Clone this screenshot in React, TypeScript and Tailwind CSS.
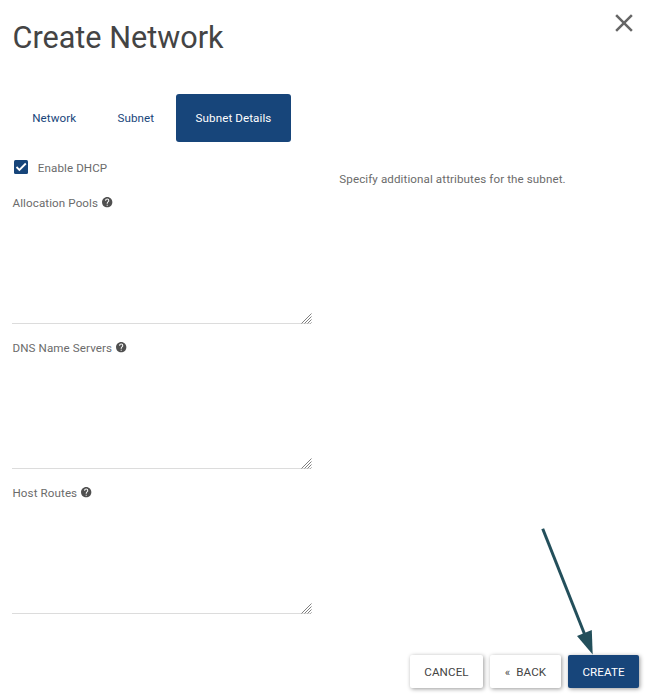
import { MdClose, MdHelp } from "react-icons/md";

function ResizeGrip() {
  return (
    <svg className="absolute -bottom-px -right-px h-[11px] w-[11px]" viewBox="0 0 11 11" aria-hidden="true">
      <path d="M0.5 10.5L10.5 0.5M3.5 10.5L10.5 3.5M6.5 10.5L10.5 6.5M9.5 10.5L10.5 9.5" stroke="#808080" strokeWidth="1" fill="none" />
    </svg>
  );
}

function Field({ label }: { label: string }) {
  return (
    <div className="h-[145px]">
      <div className="flex h-[20px] items-center gap-[3px] pl-[0.5px]">
        <span className="whitespace-nowrap">{label}</span>
        <MdHelp className="relative -top-[0.8px] size-[12.4px] text-[#505050]" />
      </div>
      <div className="relative h-[111px] w-[299px] border-b border-[#dcdcdc]">
        <ResizeGrip />
      </div>
    </div>
  );
}

export default function App() {
  return (
    <div className="flex h-[697px] w-[651px] flex-col overflow-hidden bg-white font-[Roboto,sans-serif] text-[11.6px] leading-[20px] tracking-[0.1px] text-[#6b6b6b]">
      <header className="flex h-[94px] justify-between pl-[12.5px] pr-[12px]">
        <h1 className="pt-[18px] text-[30.6px] leading-[40px] tracking-normal text-[#444]">Create Network</h1>
        <MdClose className="mt-[8.4px] size-[30px] text-[#666]" />
      </header>
      <nav className="flex h-[48px] items-center pl-[12px] text-[#17457a]">
        <span className="w-[85px] pl-[20.2px]">Network</span>
        <span className="w-[79px] pl-[20.5px]">Subnet</span>
        <span className="flex h-[48px] w-[115px] items-center justify-center rounded-[3px] bg-[#17457a] text-white">Subnet Details</span>
      </nav>
      <main className="flex h-[513px] pl-[12px]">
        <section className="w-[327px] pt-[16px]">
          <label className="flex h-[20px] items-center">
            <span className="relative -top-[0.6px] ml-[2px] mr-[9.8px] flex size-[14px] items-center justify-center rounded-[1.5px] bg-[#17457a]">
              <svg className="size-[14px]" viewBox="0 0 14 14">
                <path d="M2.5 7L5.4 9.9L11.8 3.5" fill="none" stroke="white" strokeWidth="1.8" />
              </svg>
            </span>
            Enable DHCP
          </label>
          <div className="pt-[15px]">
            <Field label="Allocation Pools" />
            <Field label="DNS Name Servers" />
            <Field label="Host Routes" />
          </div>
        </section>
        <p className="pl-[0.3px] pt-[27px]">Specify additional attributes for the subnet.</p>
      </main>
      <footer className="flex gap-[7px] pl-[410px] text-[#444]">
        <button className="h-[33px] w-[73px] rounded-[2px] bg-white shadow-[1px_1px_4px_rgba(0,0,0,0.4)]">CANCEL</button>
        <button className="h-[33px] w-[71px] whitespace-pre rounded-[2px] bg-white shadow-[1px_1px_4px_rgba(0,0,0,0.4)]">{"«  BACK"}</button>
        <button className="h-[33px] w-[71px] rounded-[2px] bg-[#17457a] text-white shadow-[1px_1px_4px_rgba(0,0,0,0.4)]">CREATE</button>
      </footer>
      <svg className="pointer-events-none absolute left-[530px] top-[515px] h-[145px] w-[80px]" viewBox="0 0 80 145">
        <path d="M12.7 13.7L54.5 119" stroke="#234f5b" strokeWidth="3" />
        <path d="M47 121L61.8 115L62.7 139.5Z" fill="#234f5b" />
      </svg>
    </div>
  );
}
